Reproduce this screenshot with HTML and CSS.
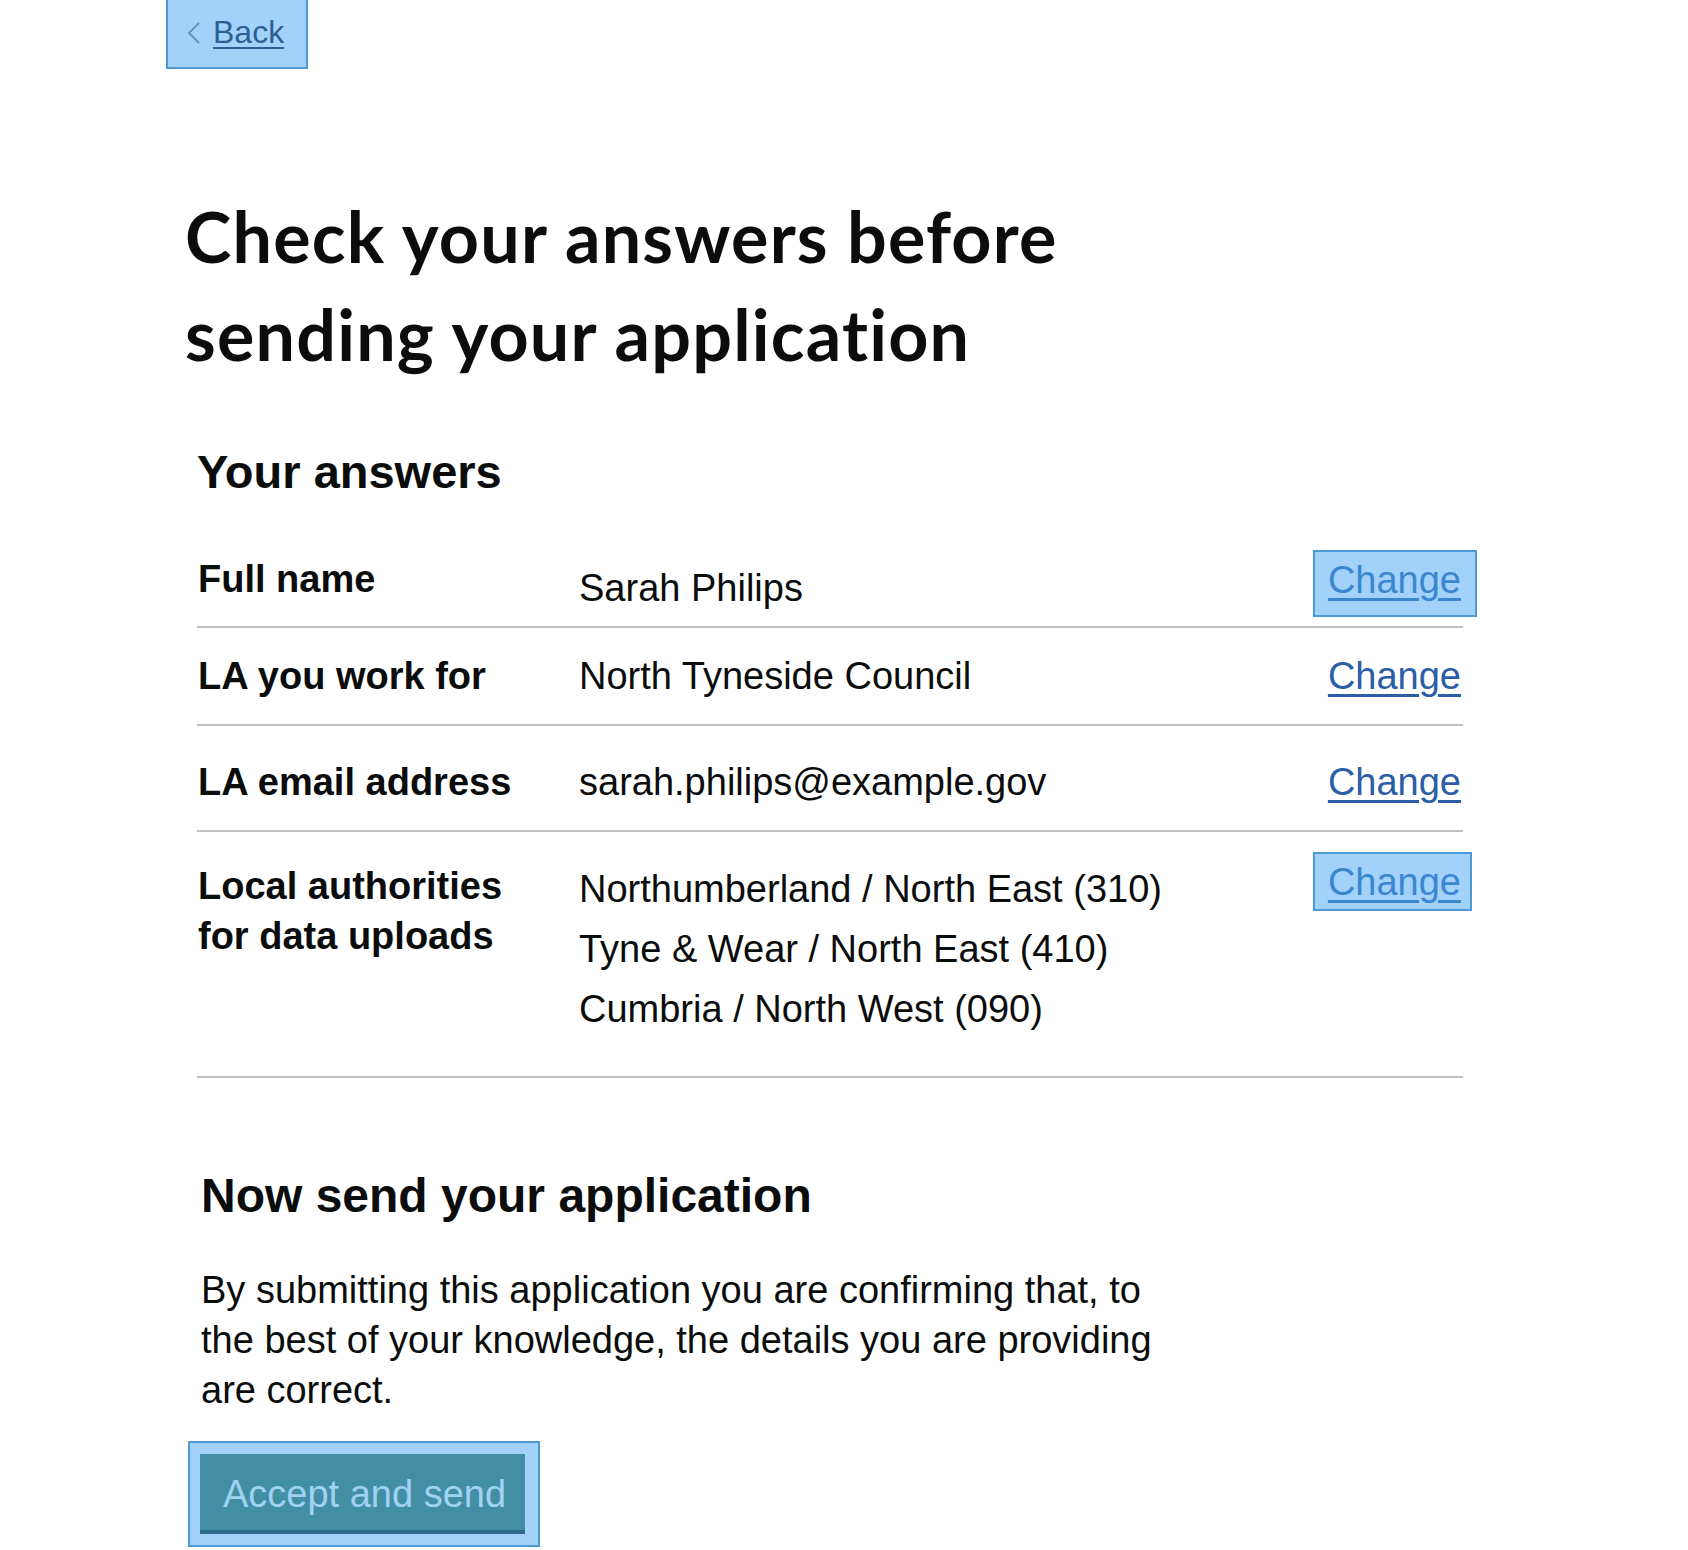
FILE: index.html
```html
<!DOCTYPE html>
<html lang="en">
<head>
<meta charset="utf-8">
<title>Check your answers before sending your application</title>
<link rel="stylesheet" href="styles.css">
</head>
<body>
<div class="page">
  <a class="back-link" href="#">
    <svg class="back-chevron" width="14" height="22" viewBox="0 0 14 22" aria-hidden="true"><polyline points="12,1 2,11 12,21" fill="none" stroke="#6f92b5" stroke-width="2"/></svg>
    <span class="back-text">Back</span>
  </a>
  <main class="main">
    <h1 class="title">Check your answers before sending your application</h1>
    <h2 class="section-heading">Your answers</h2>
    <dl class="summary">
      <div class="row row--1">
        <dt class="key">Full name</dt>
        <dd class="value">Sarah Philips</dd>
        <dd class="action"><a class="change change--hl" href="#">Change</a></dd>
      </div>
      <div class="row row--2">
        <dt class="key">LA you work for</dt>
        <dd class="value">North Tyneside Council</dd>
        <dd class="action"><a class="change" href="#">Change</a></dd>
      </div>
      <div class="row row--3">
        <dt class="key">LA email address</dt>
        <dd class="value">sarah.philips@example.gov</dd>
        <dd class="action"><a class="change" href="#">Change</a></dd>
      </div>
      <div class="row row--4">
        <dt class="key">Local authorities for data uploads</dt>
        <dd class="value">
          <div class="value-line">Northumberland / North East (310)</div>
          <div class="value-line">Tyne &amp; Wear / North East (410)</div>
          <div class="value-line">Cumbria / North West (090)</div>
        </dd>
        <dd class="action"><a class="change change--hl change--hl-tight" href="#">Change</a></dd>
      </div>
    </dl>
    <h2 class="send-heading">Now send your application</h2>
    <p class="declaration">By submitting this application you are confirming that, to the best of your knowledge, the details you are providing are correct.</p>
    <div class="button-frame">
      <button class="button" type="submit">Accept and send</button>
    </div>
  </main>
</div>
</body>
</html>
```

FILE: styles.css
```css
* { box-sizing: border-box; }

html, body {
  margin: 0;
  padding: 0;
  background: #ffffff;
}

body {
  font-family: "Liberation Sans", Arial, sans-serif;
  color: #0b0c0c;
}

.page {
  padding-left: 166px;
  width: 1688px;
  min-height: 1550px;
}

/* Back link (highlighted) */
.back-link {
  display: inline-flex;
  align-items: flex-start;
  gap: 12px;
  padding: 12px 22px 15px 19px;
  background: #a2d2f9;
  border: 2px solid #4d9bd6;
  border-top: 0;
  text-decoration: none;
  font-size: 32px;
  line-height: 40px;
}

.back-chevron {
  display: block;
  margin-top: 10px;
}

.back-text {
  color: #2e5f94;
  text-decoration: underline;
  text-decoration-thickness: 2px;
  text-underline-offset: 4px;
}

/* Headings */
.title {
  margin: 118px 0 0 19px;
  max-width: 1050px;
  font-family: Lato, "Liberation Sans", sans-serif;
  font-weight: 700;
  font-size: 70px;
  line-height: 98px;
  letter-spacing: 1.2px;
}

.section-heading {
  margin: 61px 0 31px 31px;
  font-weight: 700;
  font-size: 47px;
  line-height: 56px;
}

/* Summary list */
.summary {
  margin: 0 0 0 31px;
  width: 1266px;
}

.row {
  display: grid;
  grid-template-columns: 381px 1fr auto;
  align-items: start;
  border-bottom: 2px solid #bfc1c3;
  font-size: 38px;
  line-height: 50px;
  padding-left: 1px;
  padding-right: 2px;
}

.key {
  margin: 0;
  padding-right: 41px;
  font-weight: 700;
}

.value {
  margin: 0;
}

.value-line + .value-line {
  margin-top: 10px;
}

.action {
  margin: 0;
  text-align: right;
}

.row--1 { padding-top: 23px; padding-bottom: 13px; }
.row--1 .value { margin-top: 9px; }
.row--1 .action { margin-top: 1px; }

.row--2 { padding-top: 23px; padding-bottom: 23px; }

.row--3 { padding-top: 31px; padding-bottom: 23px; }

.row--4 { padding-top: 25px; padding-bottom: 42px; }
.row--4 .key { margin-top: 4px; }
.row--4 .value { margin-top: 7px; }

.change {
  color: #2b5ea7;
  text-decoration: underline;
  text-decoration-thickness: 3px;
  text-underline-offset: 5px;
}

.change--hl {
  display: inline-block;
  padding: 3px 14px 10px 13px;
  margin: -5px -16px -12px -15px;
  background: #a2d2f9;
  border: 2px solid #4d9bd6;
  color: #3b86d0;
}

.change--hl-tight {
  padding: 3px 9px 2px 13px;
  margin: -5px -11px -4px -15px;
}

/* Send section */
.send-heading {
  margin: 90px 0 0 35px;
  font-weight: 700;
  font-size: 48px;
  line-height: 56px;
}

.declaration {
  margin: 41px 0 0 35px;
  max-width: 980px;
  font-size: 38px;
  line-height: 50px;
}

.button-frame {
  width: max-content;
  margin: 26px 0 0 22px;
  padding: 11px 13px 11px 10px;
  background: #a2d2f9;
  border: 2px solid #4d9bd6;
}

.button {
  display: block;
  margin: 0 0 4px 0;
  padding: 15px 19px 11px 23px;
  border: 0;
  border-radius: 0;
  background: #428fa4;
  box-shadow: 0 4px 0 #2c6b8a;
  color: #a0d2f4;
  font-family: "Liberation Sans", Arial, sans-serif;
  font-size: 38px;
  line-height: 50px;
  cursor: pointer;
}
```
